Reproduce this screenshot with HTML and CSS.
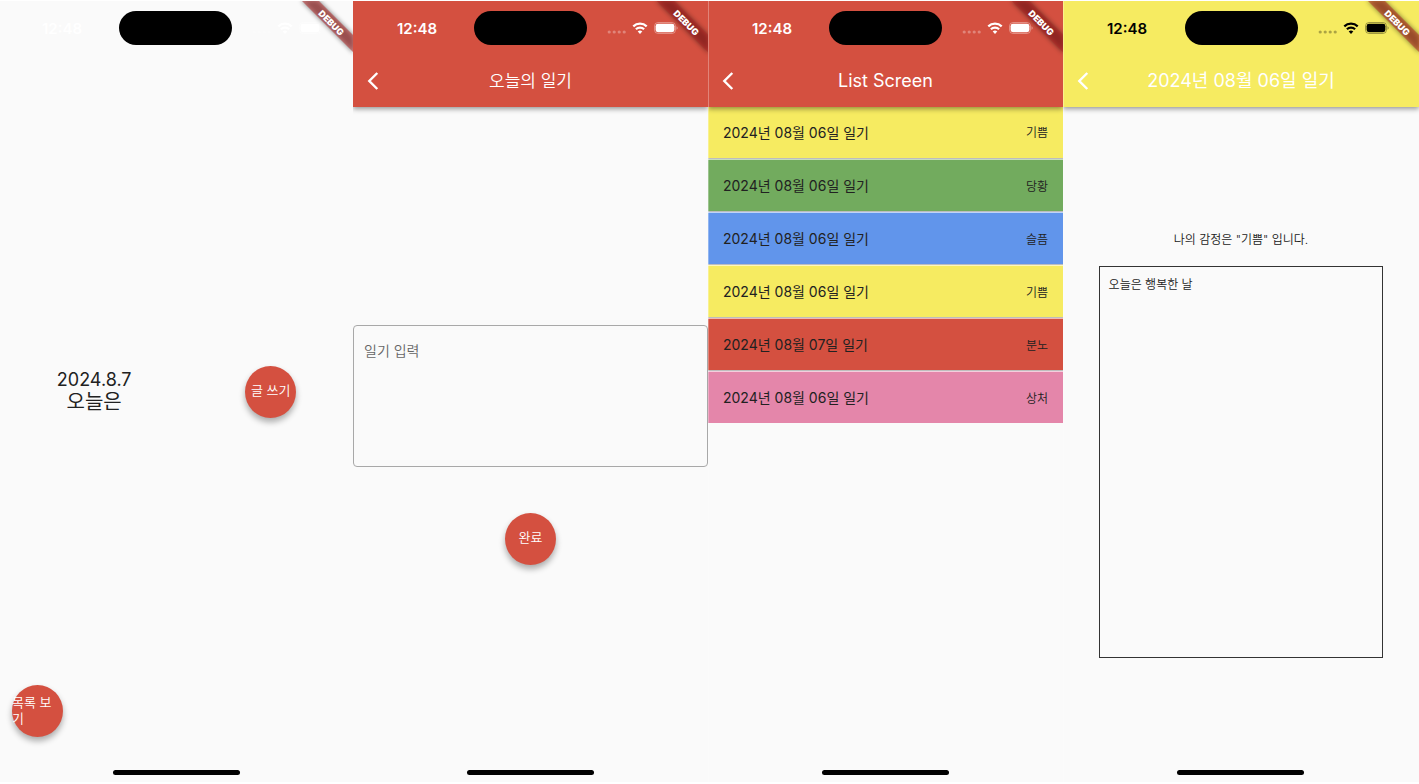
FILE: index.html
```html
<!DOCTYPE html>
<html lang="ko">
<head>
<meta charset="utf-8">
<meta name="viewport" content="width=device-width, initial-scale=1">
<title>오늘의 일기</title>
<link rel="stylesheet" href="styles.css">
</head>
<body>
<svg class="defs" aria-hidden="true">
  <defs>
    <filter id="soft" x="-50%" y="-50%" width="200%" height="200%"><feGaussianBlur stdDeviation="2.5"/></filter>
    <symbol id="cell" viewBox="0 0 20 14">
      <g fill="currentColor" opacity=".3"><circle cx="2.2" cy="11" r="1.6"/><circle cx="7.2" cy="11" r="1.6"/><circle cx="12.2" cy="11" r="1.6"/><circle cx="17.2" cy="11" r="1.6"/></g>
    </symbol>
    <symbol id="wifi" viewBox="0 0 16 14">
      <g fill="none" stroke="currentColor" stroke-width="2.2">
        <path d="M1.3 5.4a9.6 9.6 0 0 1 13.4 0"/>
        <path d="M3.9 8.2a5.9 5.9 0 0 1 8.2 0"/>
      </g>
      <path fill="currentColor" d="M8 13l-2.3-2.4a3.3 3.3 0 0 1 4.6 0z"/>
    </symbol>
    <symbol id="battery" viewBox="0 0 25 14">
      <rect x="1.5" y="1.5" width="21" height="11" rx="3.6" fill="none" stroke="currentColor" opacity=".35"/>
      <rect x="2.6" y="2.8" width="18.8" height="8.4" rx="2.4" fill="currentColor"/>
      <path d="M23.5 5.2c1.6.7 1.6 2.9 0 3.6z" fill="currentColor" opacity=".4"/>
    </symbol>
    <symbol id="back" viewBox="0 0 12 18">
      <path d="M10.3 1L2.3 9l8 8" fill="none" stroke="currentColor" stroke-width="2.4"/>
    </symbol>
    <symbol id="banner" viewBox="0 0 60 60">
      <path d="M8 -1L25 -1L61 35L61 52z" fill="#000" opacity=".5" filter="url(#soft)"/>
      <path d="M8 -1L25 -1L61 35L61 52z" fill="#b52424" opacity=".52"/>
      <text class="banner-text" x="38" y="25" transform="rotate(45 38 22)" text-anchor="middle" fill="#fff">DEBUG</text>
    </symbol>
  </defs>
</svg>

<div class="board">
  <section class="screen home">
    <div class="status light">
      <span class="time">12:48</span><span class="island"></span>
      <span class="indicators"><svg class="cell faint"><use href="#cell"/></svg><svg class="wifi"><use href="#wifi"/></svg><svg class="battery"><use href="#battery"/></svg></span>
    </div>
    <div class="today">
      <p class="date">2024.8.7<br><span class="today-word">오늘은</span></p>
      <button class="fab" type="button">글 쓰기</button>
    </div>
    <div class="corner"><button class="fab wrap" type="button">목록 보<br>기</button></div>
    <svg class="banner" aria-hidden="true"><use href="#banner"/></svg>
    <span class="home-bar"></span>
  </section>

  <section class="screen">
    <header class="appbar red">
      <div class="status light">
        <span class="time">12:48</span><span class="island"></span>
        <span class="indicators"><svg class="cell"><use href="#cell"/></svg><svg class="wifi"><use href="#wifi"/></svg><svg class="battery"><use href="#battery"/></svg></span>
      </div>
      <div class="toolbar">
        <button class="back" type="button" aria-label="뒤로"><svg class="chevron"><use href="#back"/></svg></button>
        <h1 class="title korean">오늘의 일기</h1>
      </div>
    </header>
    <form class="editor">
      <textarea class="entry" placeholder="일기 입력" aria-label="일기 입력"></textarea>
      <button class="fab" type="button">완료</button>
    </form>
    <svg class="banner" aria-hidden="true"><use href="#banner"/></svg>
    <span class="home-bar"></span>
  </section>

  <section class="screen edged">
    <header class="appbar red">
      <div class="status light">
        <span class="time">12:48</span><span class="island"></span>
        <span class="indicators"><svg class="cell"><use href="#cell"/></svg><svg class="wifi"><use href="#wifi"/></svg><svg class="battery"><use href="#battery"/></svg></span>
      </div>
      <div class="toolbar">
        <button class="back" type="button" aria-label="뒤로"><svg class="chevron"><use href="#back"/></svg></button>
        <h1 class="title">List Screen</h1>
      </div>
    </header>
    <ul class="list">
      <li class="row yellow"><span>2024년 08월 06일 일기</span><span class="mood">기쁨</span></li>
      <li class="row green"><span>2024년 08월 06일 일기</span><span class="mood">당황</span></li>
      <li class="row blue"><span>2024년 08월 06일 일기</span><span class="mood">슬픔</span></li>
      <li class="row yellow"><span>2024년 08월 06일 일기</span><span class="mood">기쁨</span></li>
      <li class="row red"><span>2024년 08월 07일 일기</span><span class="mood">분노</span></li>
      <li class="row pink"><span>2024년 08월 06일 일기</span><span class="mood">상처</span></li>
    </ul>
    <svg class="banner" aria-hidden="true"><use href="#banner"/></svg>
    <span class="home-bar"></span>
  </section>

  <section class="screen edged">
    <header class="appbar yellow">
      <div class="status dark">
        <span class="time">12:48</span><span class="island"></span>
        <span class="indicators"><svg class="cell"><use href="#cell"/></svg><svg class="wifi"><use href="#wifi"/></svg><svg class="battery"><use href="#battery"/></svg></span>
      </div>
      <div class="toolbar">
        <button class="back" type="button" aria-label="뒤로"><svg class="chevron"><use href="#back"/></svg></button>
        <h1 class="title">2024년 08월 06일 일기</h1>
      </div>
    </header>
    <div class="detail">
      <p class="feeling">나의 감정은 "기쁨" 입니다.</p>
      <div class="note">오늘은 행복한 날</div>
    </div>
    <svg class="banner" aria-hidden="true"><use href="#banner"/></svg>
    <span class="home-bar"></span>
  </section>
</div>
</body>
</html>
```
FILE: styles.css
```css
* { box-sizing: border-box; }

body {
  margin: 0;
  background: #fff;
  color: #212121;
  font-family: Inter, "Noto Sans CJK KR", sans-serif;
  font-weight: 400;
}

p, h1, ul { margin: 0; padding: 0; }
button { border: 0; padding: 0; font-family: inherit; cursor: pointer; }
svg { display: block; }

.defs { position: absolute; width: 0; height: 0; }

.board {
  display: grid;
  grid-template-columns: 353fr 355fr 355fr 356fr;
  min-height: 100vh;
  padding: 1px 0 2px;
}

.screen {
  position: relative;
  display: flex;
  flex-direction: column;
  overflow: hidden;
  background: #fafafa;
}

.edged::after {
  content: "";
  position: absolute;
  z-index: 3;
  inset: 0 auto 0 0;
  width: 1px;
  background: rgba(255, 255, 255, .3);
}

.red { background: #d45040; }
.yellow { background: #f6eb61; }
.green { background: #72ab5e; }
.blue { background: #6195eb; }
.pink { background: #e486aa; }

/* status bar */
.status {
  display: grid;
  grid-template-columns: 1fr auto 1fr;
  align-items: center;
  height: 54px;
}
.light { color: #fff; }
.dark { color: #000; }
.time { padding-left: 44px; font-size: 15px; font-weight: 600; }
.island { width: 113px; height: 34px; border-radius: 17px; background: #000; }
.indicators { display: flex; align-items: center; gap: 5px; padding-left: 20px; }
.cell { width: 20px; height: 14px; }
.faint { opacity: .5; }
.wifi { width: 16px; height: 14px; }
.battery { width: 25px; height: 14px; }

/* app bar */
.appbar {
  position: relative;
  z-index: 1;
  box-shadow: 0 2px 5px rgba(0, 0, 0, .4);
}
.toolbar {
  display: grid;
  grid-template-columns: 40px 1fr 40px;
  align-items: center;
  height: 52px;
  color: #fff;
}
.back { display: flex; justify-content: center; background: none; color: inherit; }
.chevron { width: 12px; height: 18px; }
.title { font-size: 18px; font-weight: 400; line-height: 24px; text-align: center; }
.title.korean { font-size: 17px; font-weight: 350; }

.banner {
  position: absolute;
  z-index: 2;
  top: 0;
  right: 0;
  width: 60px;
  height: 60px;
}
.banner-text { font-size: 9px; font-weight: 900; }

.home-bar {
  position: absolute;
  bottom: 7px;
  left: 50%;
  width: 127px;
  height: 5px;
  margin-left: -64px;
  border-radius: 3px;
  background: #000;
}

.fab {
  width: 51px;
  height: 52px;
  padding-bottom: 3px;
  border-radius: 50%;
  background: #d45040;
  box-shadow: 0 4px 6px rgba(0, 0, 0, .32);
  color: #fff;
  font-size: 13px;
  font-weight: 350;
  line-height: 16px;
}
.fab.wrap { text-align: left; }

/* home */
.home { display: grid; grid-template-rows: 1fr auto 1fr; }
.home .status { align-self: start; padding-right: 3px; }
.home .time { padding-left: 42px; }
.today { display: flex; align-items: center; justify-content: space-around; }
.date { padding-bottom: 2px; font-size: 18px; line-height: 23px; text-align: center; }
.today-word { font-size: 20px; }
.corner { align-self: end; padding: 0 12px 45px; }

/* editor */
.editor {
  flex: 1;
  display: flex;
  flex-direction: column;
  align-items: center;
  justify-content: center;
  gap: 46px;
}
.entry {
  width: 100%;
  height: 142px;
  padding: 15px 10px;
  border: 1px solid #a8a8a8;
  border-radius: 4px;
  background: transparent;
  color: #212121;
  font-family: inherit;
  font-size: 14px;
  font-weight: 350;
  line-height: 20px;
  resize: none;
}
.entry::placeholder { color: #666; }

/* list */
.list { list-style: none; }
.row {
  display: flex;
  align-items: center;
  justify-content: space-between;
  height: 51px;
  padding: 0 15px 2px;
  font-size: 14px;
}
.row + .row {
  height: 53px;
  padding-bottom: 0;
  border-top: 1px solid #bdbdbd;
  box-shadow: inset 0 1px rgba(255, 255, 255, .6);
}
.mood { font-size: 12px; font-weight: 350; }

/* detail */
.detail {
  flex: 1;
  display: flex;
  flex-direction: column;
  align-items: center;
  justify-content: center;
  gap: 18px;
  font-weight: 350;
}
.feeling { font-size: 12px; line-height: 17px; }
.note {
  width: 80%;
  height: 50vh;
  padding: 9px;
  border: 1px solid #333;
  font-size: 12px;
  line-height: 17px;
}
```
